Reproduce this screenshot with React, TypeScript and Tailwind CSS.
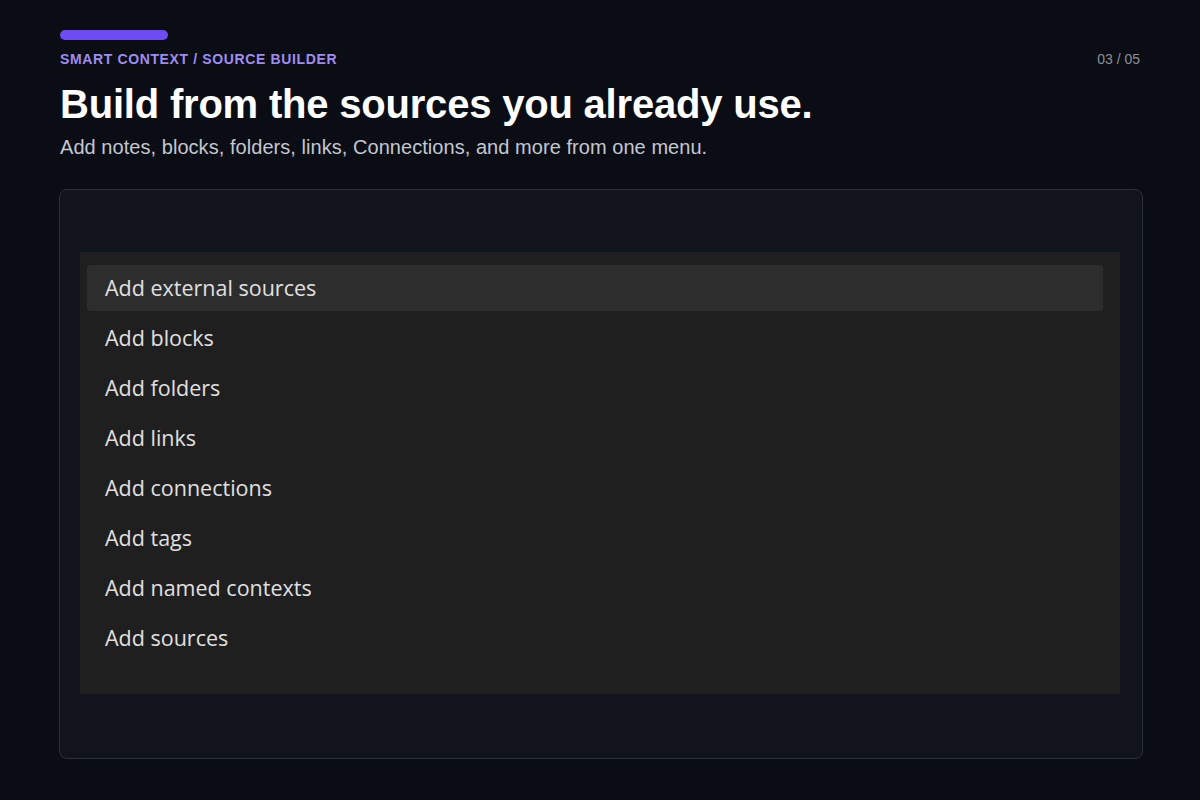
const items = [
  "Add external sources",
  "Add blocks",
  "Add folders",
  "Add links",
  "Add connections",
  "Add tags",
  "Add named contexts",
  "Add sources",
];

export default function App() {
  return (
    <div className="h-[800px] w-[1200px] bg-[#0b0d14] px-[60px] pt-[30px] font-['Liberation_Sans',Arial,sans-serif]">
      <div className="h-[10px] w-[108px] rounded-full bg-[#6d4cf5]" />
      <div className="mt-[11px] flex items-center justify-between">
        <span className="text-[14px] font-bold leading-[16px] tracking-[0.045em] text-[#9f8cf0]">
          SMART CONTEXT / SOURCE BUILDER
        </span>
        <span className="text-[14px] leading-[16px] text-[#8b909a]">03 / 05</span>
      </div>
      <h1 className="mt-[14px] text-[40px] font-bold leading-[46px] tracking-[-0.2px] text-white">
        Build from the sources you already use.
      </h1>
      <p className="mt-[8px] text-[20px] leading-[24px] tracking-[0.05px] text-[#c3c7d0]">
        Add notes, blocks, folders, links, Connections, and more from one menu.
      </p>
      <div className="-ml-px -mr-[3px] mt-[30px] rounded-[8px] border border-[#2b303b] bg-[#11141c] pb-[64px] pl-[20px] pr-[22px] pt-[62px]">
        <div className="bg-[#1f1f1f] pb-[33px] pl-[7px] pr-[17px] pt-[13px] font-['Open_Sans','Noto_Sans',sans-serif]">
          <div className="flex flex-col gap-[4px]">
            {items.map((label, i) => (
              <div
                key={label}
                className={`flex h-[46px] items-center rounded-[4px] px-[18px] pt-[1px] text-[21.5px] text-[#e0e0e0] ${
                  i === 0 ? "bg-[#2d2d2d]" : ""
                }`}
              >
                {label}
              </div>
            ))}
          </div>
        </div>
      </div>
    </div>
  );
}
